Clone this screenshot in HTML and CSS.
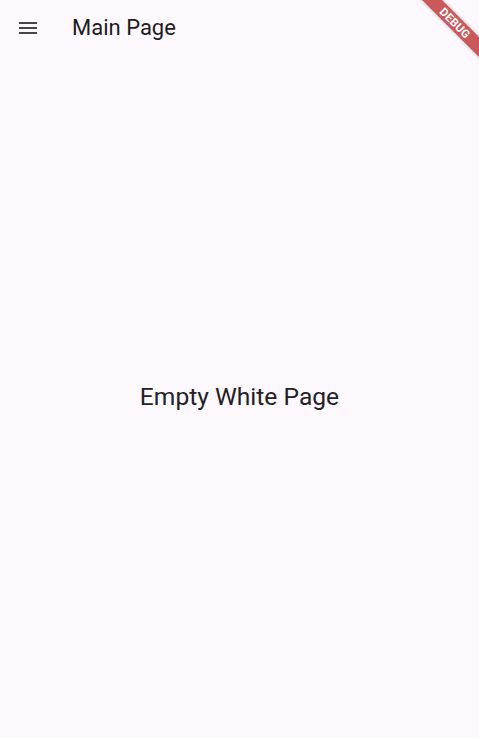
FILE: index.html
```html
<!DOCTYPE html>
<html>
<head>
<meta charset="utf-8">
<link rel="stylesheet" href="styles.css">
</head>
<body>
<div class="app">
  <header class="appbar">
    <button class="menu" aria-label="Menu">
      <svg width="24" height="24" viewBox="0 0 24 24"><path d="M3 18h18v-2H3v2zm0-5h18v-2H3v2zm0-7v2h18V6H3z" fill="#49454F"/></svg>
    </button>
    <h1 class="title">Main Page</h1>
  </header>
  <main class="body">
    <p class="msg">Empty White Page</p>
  </main>
  <div class="banner"><span>DEBUG</span></div>
</div>
</body>
</html>
```
FILE: styles.css
```css
html, body { margin: 0; padding: 0; }
body { background: #FDF8FD; font-family: Roboto, "Noto Sans", sans-serif; color: #1D1B20; overflow: hidden; }
.app { position: relative; width: 479px; height: 738px; display: flex; flex-direction: column; overflow: hidden; }
.appbar { height: 56px; display: flex; align-items: center; padding-left: 4px; flex: none; }
.menu { width: 48px; height: 48px; border: 0; background: none; padding: 0; display: flex; align-items: center; justify-content: center; }
.title { margin: 0 0 0 20px; font-size: 22px; font-weight: 400; line-height: 28px; color: #1D1B20; }
.body { flex: 1; display: flex; align-items: center; justify-content: center; }
.msg { margin: 0; font-size: 24.6px; line-height: 32px; color: #232126; }
.banner { position: absolute; left: 394px; top: 16px; width: 122px; height: 14px; background: rgba(183,28,28,0.72); transform: rotate(45deg); display: flex; align-items: center; justify-content: center; box-shadow: 0 0 4px rgba(0,0,0,0.25); }
.banner span { color: #fff; font-size: 11.5px; font-weight: 700; line-height: 14px; letter-spacing: 0.2px; }
```
